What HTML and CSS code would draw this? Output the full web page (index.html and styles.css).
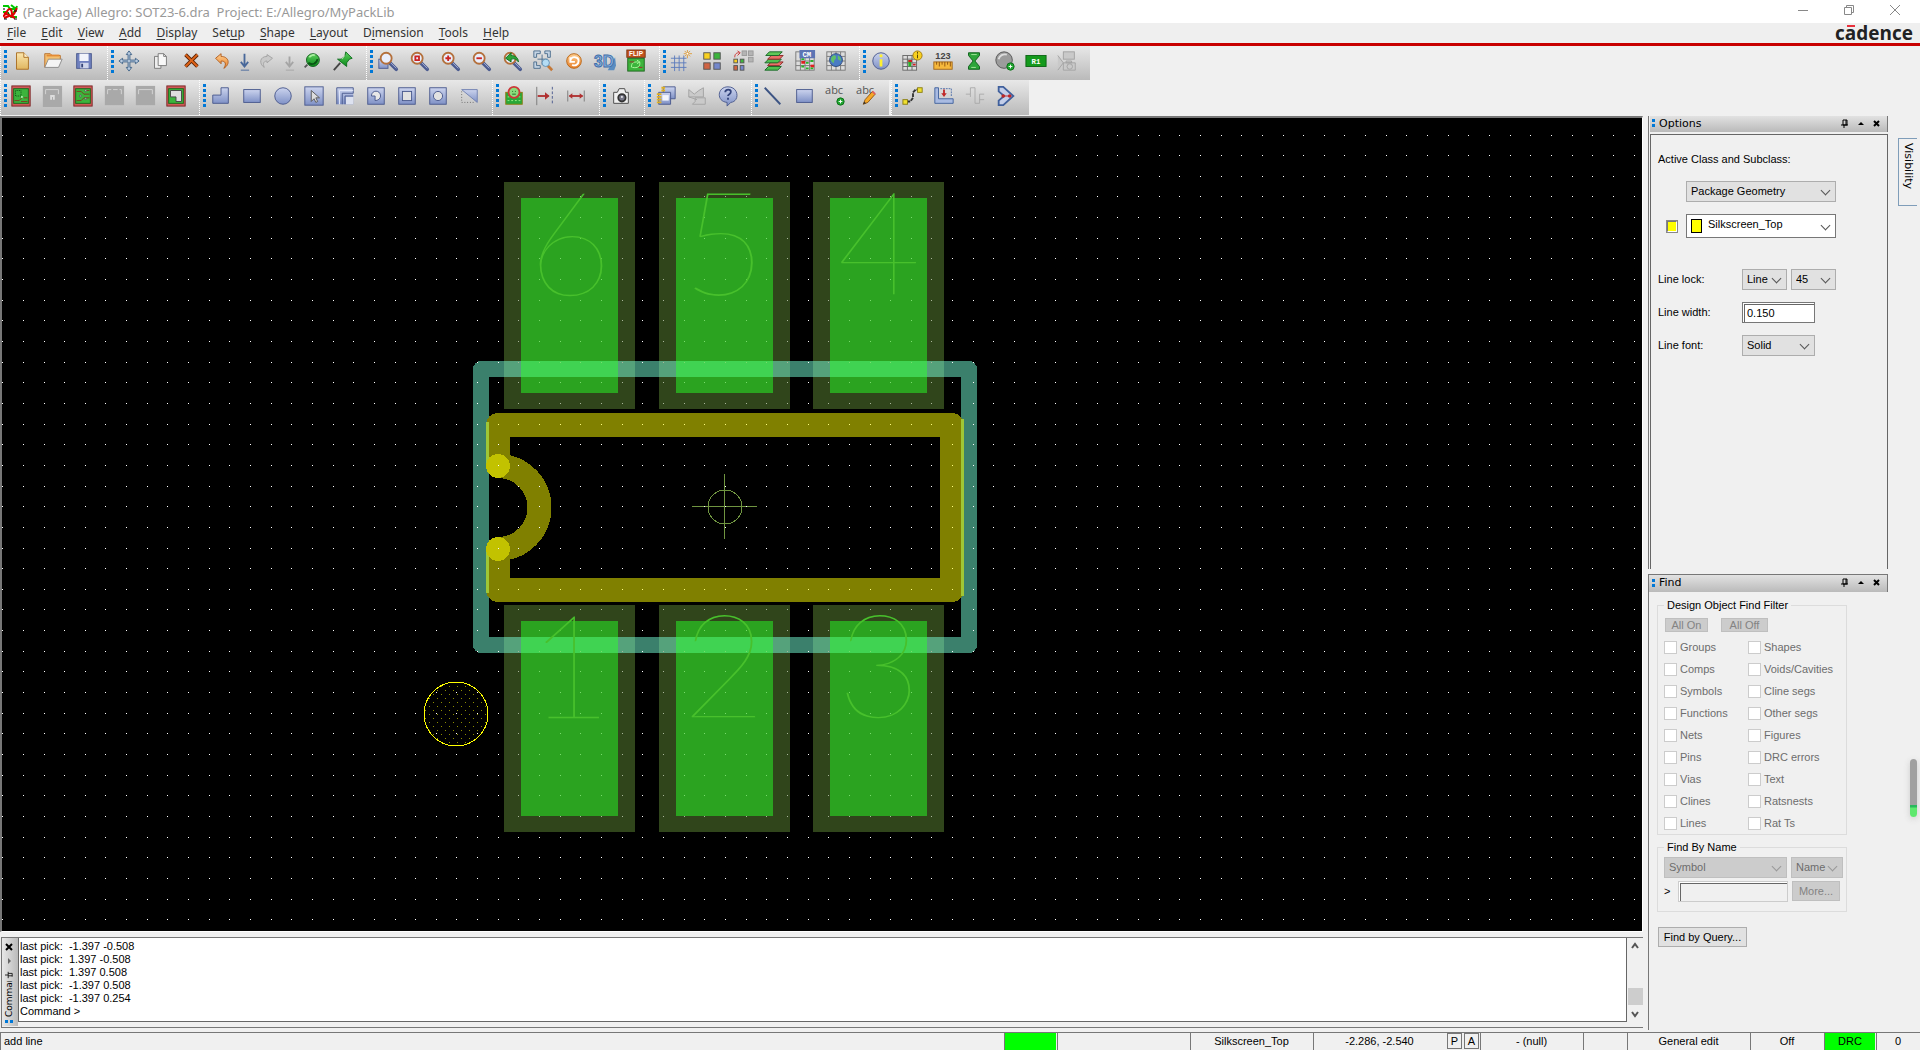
FILE: index.html
```html
<!DOCTYPE html>
<html lang="en">
<head>
<meta charset="utf-8">
<title>(Package) Allegro: SOT23-6.dra  Project: E:/Allegro/MyPackLib</title>
<link rel="stylesheet" href="styles.css">
</head>
<body>
<svg class="defs" aria-hidden="true">
  <defs>
    <linearGradient id="gBlue" x1="0" y1="0" x2="0" y2="1"><stop offset="0" stop-color="#ccd4ee"/><stop offset="1" stop-color="#7f91c6"/></linearGradient>
    <linearGradient id="gGold" x1="0" y1="0" x2="0" y2="1"><stop offset="0" stop-color="#fbe6ae"/><stop offset="1" stop-color="#e0b660"/></linearGradient>
    <linearGradient id="gGreen" x1="0" y1="0" x2="0" y2="1"><stop offset="0" stop-color="#5fd05f"/><stop offset="1" stop-color="#0a8a1a"/></linearGradient>
    <linearGradient id="gOrange" x1="0" y1="0" x2="0" y2="1"><stop offset="0" stop-color="#ffcf90"/><stop offset="1" stop-color="#e8802a"/></linearGradient>
    <g id="lens"><path d="M14 14l7 7" stroke="#4c5c90" stroke-width="4" stroke-linecap="round"/><path d="M15 14l6 6" stroke="#a8b4dc" stroke-width="1"/><circle cx="10" cy="9" r="6" fill="#e9eefc" stroke="#b4703c" stroke-width="2"/></g>
    <g id="board"><rect x="2" y="1" width="20" height="22" fill="#cf5a58" stroke="#7c2424"/><rect x="4" y="4" width="16" height="16" fill="#3cb43c" stroke="#1c661c"/></g>
    <g id="plus"><circle cx="18" cy="18" r="4" fill="#1fa52f" stroke="#0c6c18"/><path d="M18 16v4M16 18h4" stroke="#fff"/></g>
  </defs>
</svg>

<header class="titlebar">
  <svg class="app-icon" viewBox="0 0 16 16"><path d="M1 2h5l2 3h6l1-3M1 8h4l4 5h6M9 1l5 4-4 6" stroke="#00c800" stroke-width="2" fill="none"/><path d="M1 12c3 0 4-8 7-7s1 7 3 6 3-6 4-7M2 9l11 5M2 14l5-2" stroke="#e00000" stroke-width="2" fill="none"/><path d="M1 5h2M6 9h1M12 7h3M12 15h3M2 15h3" stroke="#000"/></svg>
  <h1>(Package) Allegro: SOT23-6.dra&nbsp; Project: E:/Allegro/MyPackLib</h1>
  <div class="window-buttons">
    <button aria-label="Minimize"><svg viewBox="0 0 12 12"><path d="M1 6.500h10" /></svg></button>
    <button aria-label="Restore"><svg viewBox="0 0 12 12"><path d="M1.500 3.500h7v7h-7zM3.500 3.500v-2h7v7h-2"/></svg></button>
    <button aria-label="Close"><svg viewBox="0 0 12 12"><path d="M1 1l10 10M11 1L1 11"/></svg></button>
  </div>
</header>

<nav class="menubar">
  <ul>
    <li><a href="#"><u>F</u>ile</a></li><li><a href="#"><u>E</u>dit</a></li><li><a href="#"><u>V</u>iew</a></li><li><a href="#"><u>A</u>dd</a></li><li><a href="#"><u>D</u>isplay</a></li><li><a href="#">Set<u>u</u>p</a></li><li><a href="#"><u>S</u>hape</a></li><li><a href="#"><u>L</u>ayout</a></li><li><a href="#">D<u>i</u>mension</a></li><li><a href="#"><u>T</u>ools</a></li><li><a href="#"><u>H</u>elp</a></li>
  </ul>
  <strong class="brand">c<span class="brand-a">a</span>dence</strong>
</nav>

<section class="toolbars" aria-label="Toolbars">
  <div class="toolbar-row">
    <div class="group">
      <button aria-label="New"><svg viewBox="0 0 24 24"><path d="M6 3h8l5 5v13H6z" fill="url(#gGold)" stroke="#a86c20"/><path d="M14 3v5h5" fill="#fff3cf" stroke="#a86c20"/></svg></button>
      <button aria-label="Open"><svg viewBox="0 0 24 24"><path d="M3 19V4h6l2 2h9v5" fill="#f4c070" stroke="#b8702c"/><path d="M3 19l4-9h15l-4 9z" fill="#f5f5f5" stroke="#8a8a8a"/><path d="M5 6h14" stroke="#e48a34" stroke-width="2"/></svg></button>
      <button aria-label="Save"><svg viewBox="0 0 24 24"><rect x="4" y="4" width="16" height="16" fill="#6f80be" stroke="#48588c"/><rect x="7" y="4" width="10" height="8" fill="#f2f4fb"/><rect x="8" y="14" width="9" height="6" fill="#cfd6ea"/><path d="M10 15v4" stroke="#36457a" stroke-width="2"/></svg></button>
    </div>
    <div class="group">
      <button aria-label="Move"><svg viewBox="0 0 24 24"><path d="M12 1l3 4h-2v6h6V9l4 3-4 3v-2h-6v6h2l-3 4-3-4h2v-6H5v2l-4-3 4-3v2h6V5H9z" fill="#b9cbe0" stroke="#3f6288"/></svg></button>
      <button aria-label="Copy"><svg viewBox="0 0 24 24"><path d="M6 7h7v13H6z" fill="#eee" stroke="#777"/><path d="M10 4h6l3 3v10h-9z" fill="#f8f8f8" stroke="#777"/><path d="M16 4v3h3" fill="none" stroke="#777"/></svg></button>
      <button aria-label="Delete"><svg viewBox="0 0 24 24"><path d="M6 5l13 13M19 5L6 18" stroke="#5c2408" stroke-width="4"/><path d="M6 5l13 13M19 5L6 18" stroke="#e06418" stroke-width="2"/></svg></button>
      <button aria-label="Undo"><svg viewBox="0 0 24 24"><path d="M5 9l6-5v3c8 0 11 8 3 13 3-5 2-8-3-8v3z" fill="url(#gOrange)" stroke="#b05c1c"/></svg></button>
      <button class="slim" aria-label="Undo history"><svg viewBox="0 0 12 24"><path d="M6 4v13M2 13l4 5 4-5" stroke="#48689a" stroke-width="2" fill="none"/><path d="M2 22h9" stroke="#48689a"/></svg></button>
      <button aria-label="Redo"><svg viewBox="0 0 24 24"><path d="M18 9l-6-4v2c-8 0-9 8-3 12-2-5 0-7 3-7v2z" fill="#c9c9c9" stroke="#a2a2a2"/></svg></button>
      <button class="slim" aria-label="Redo history"><svg viewBox="0 0 12 24"><path d="M6 7v11M2 13l4 5 4-5" stroke="#a5a5a5" stroke-width="2" fill="none"/><path d="M2 22h9" stroke="#a5a5a5"/></svg></button>
      <button aria-label="Fix"><svg viewBox="0 0 24 24"><path d="M7 16l-3 3" stroke="#555" stroke-width="2"/><circle cx="13" cy="11" r="7" fill="url(#gGreen)" stroke="#0c5c18"/><path d="M8 14c4 3 9 1 10-4" stroke="#0a5414" stroke-width="2" fill="none"/><path d="M9 8c2-3 5-3 6-2" stroke="#a8f0a0" stroke-width="2" fill="none"/></svg></button>
      <button aria-label="Unfix"><svg viewBox="0 0 24 24"><path d="M9 14l-7 8" stroke="#444" stroke-width="2"/><path d="M15 2l7 7-3 1-3 4v4L6 10h4l4-3z" fill="url(#gGreen)" stroke="#0c6c1c"/><path d="M14 6l-3 4" stroke="#b0f0a8"/></svg></button>
    </div>
    <div class="group">
      <button aria-label="Zoom points"><svg viewBox="0 0 24 24"><rect x="2" y="10" width="10" height="10" fill="url(#gBlue)" stroke="#4c5c90"/><use href="#lens"/></svg></button>
      <button aria-label="Zoom fit"><svg viewBox="0 0 24 24"><use href="#lens"/><path d="M8 7h4v4h-4z" fill="none" stroke="#cc2222" stroke-width="2"/></svg></button>
      <button aria-label="Zoom in"><svg viewBox="0 0 24 24"><use href="#lens"/><path d="M10 6v6M7 9h6" stroke="#cc2222" stroke-width="2"/></svg></button>
      <button aria-label="Zoom out"><svg viewBox="0 0 24 24"><use href="#lens"/><path d="M7 9h6" stroke="#cc2222" stroke-width="2"/></svg></button>
      <button aria-label="Zoom previous"><svg viewBox="0 0 24 24"><use href="#lens"/><path d="M5 9l6-6v3c5 0 8 3 8 7-2-3-4-4-8-3v3z" fill="#2da53a" stroke="#0c6c18"/></svg></button>
      <button aria-label="Zoom selection"><svg viewBox="0 0 24 24"><path d="M2 8V1h7v3H5v4zM14 1h6v7h-3V4h-3zM2 13v7h7v-3H5v-4z" fill="#c4d4e4" stroke="#4c6c8c"/><path d="M11 5v11M6 10h11" stroke="#4c6c8c"/><path d="M17 17l5 5" stroke="#c47838" stroke-width="3"/><circle cx="15" cy="14" r="4" fill="#b4dcf4" stroke="#6090b4"/></svg></button>
      <button aria-label="Redraw"><svg viewBox="0 0 24 24"><circle cx="12" cy="12" r="8" fill="url(#gOrange)" stroke="#b86414"/><path d="M8 8v5h5M8 12c1-6 9-5 9 0 0 4-4 6-7 4" stroke="#fff" stroke-width="2" fill="none"/></svg></button>
      <button aria-label="3D view"><svg viewBox="0 0 24 24"><path d="M15 22h7l2-5-1-9z" fill="#5a8cc0"/><text x="0" y="19" class="t3d">3D</text></svg></button>
      <button aria-label="Flip"><svg viewBox="0 0 24 24"><rect x="2" y="0" width="20" height="8" fill="#c4541c" stroke="#7c3010"/><text x="12" y="7" class="tflip">FLIP</text><rect x="3" y="9" width="18" height="14" fill="#3cb43c" stroke="#1c641c"/><path d="M7 19c0-5 2-6 7-6M8 19c6 1 9-1 8-6M13 11l3 2-3 2" stroke="#b0ffa0" fill="none"/><path d="M5 13h5M15 19h4" stroke="#9c2c2c"/></svg></button>
    </div>
    <div class="group">
      <button aria-label="Grid"><svg viewBox="0 0 24 24"><path d="M5 6v17M10 6v17M15 6v17M1 9h17M1 14h17M1 19h17" stroke="#5c7cbc" fill="none"/><path d="M19 0v9M15 4h9M16 1l6 6M22 1l-6 6" stroke="#dd9c3c"/><circle cx="19" cy="4" r="1" fill="#fff"/></svg></button>
      <button aria-label="Colors"><svg viewBox="0 0 24 24"><g stroke="#555"><rect x="3" y="3" width="7" height="7" fill="#f8d020"/><rect x="14" y="3" width="7" height="7" fill="#3cb43c"/><rect x="3" y="14" width="7" height="7" fill="#d06444"/><rect x="14" y="14" width="7" height="7" fill="#7488cc"/></g></svg></button>
      <button aria-label="Color palette"><svg viewBox="0 0 24 24"><g fill="#b4b4b4" stroke="#999"><rect x="11" y="1" width="5" height="5"/><rect x="18" y="1" width="5" height="5"/><rect x="18" y="8" width="5" height="5"/></g><g stroke="#555"><rect x="2" y="10" width="4" height="4" fill="#f8d020"/><rect x="9" y="10" width="4" height="4" fill="#3cb43c"/><rect x="2" y="17" width="4" height="5" fill="#d06444"/><rect x="9" y="17" width="4" height="5" fill="#7488cc"/></g><path d="M3 8c0-4 2-5 5-5M6 1l3 2-3 3" stroke="#cc3030" fill="none"/></svg></button>
      <button aria-label="Layers"><svg viewBox="0 0 24 24"><path d="M2 22l4-4h14l-4 4z" fill="#50c050" stroke="#146424"/><path d="M5 17l4-4h13l-4 4z" fill="#e87068" stroke="#8c2424"/><path d="M2 14l4-4h14l-4 4z" fill="#50c050" stroke="#146424"/><path d="M5 10l4-4h13l-4 4z" fill="#e87068" stroke="#8c2424"/><path d="M3 6l4-4h14l-4 4z" fill="#60c858" stroke="#146424"/></svg></button>
      <button aria-label="Constraint manager"><svg viewBox="0 0 24 24"><rect x="2" y="2" width="20" height="20" fill="#ddd" stroke="#777"/><path d="M7 2v20M12 2v20M17 2v20M2 12h20M2 17h20" stroke="#777"/><rect x="8" y="12" width="4" height="3" fill="#e02020"/><rect x="18" y="16" width="4" height="3" fill="#e02020"/><path d="M8 10h3M8 18h3M13 14h3M13 20h3M18 12h3M18 20h3" stroke="#28b428" stroke-width="2"/><rect x="6" y="0" width="17" height="9" fill="#5c74b4"/><text x="14" y="8" class="tcm">CM</text></svg></button>
      <button aria-label="Database"><svg viewBox="0 0 24 24"><rect x="2" y="2" width="20" height="20" fill="#ddd" stroke="#777"/><path d="M7 2v20M12 2v20M17 2v20M2 7h20M2 12h20M2 17h20" stroke="#777"/><circle cx="12" cy="11" r="7" fill="#4a7cc4" stroke="#28487c"/><path d="M7 8c2-3 5-3 5 0s-3 3-2 6c-3 0-4-3-3-6zM14 6c3 1 4 4 3 6l-3-2z" fill="#60c068"/></svg></button>
    </div>
    <div class="group">
      <button aria-label="Show element"><svg viewBox="0 0 24 24"><circle cx="12" cy="12" r="9" fill="url(#gBlue)" stroke="#48588c"/><path d="M12 10v8M12 5v3" stroke="#fff030" stroke-width="3"/></svg></button>
      <button aria-label="Property report"><svg viewBox="0 0 24 24"><rect x="2" y="6" width="15" height="16" fill="#ddd" stroke="#666"/><path d="M7 6v16M12 6v16M2 10h15M2 14h15M2 18h15" stroke="#666"/><path d="M8 11h3v7H8z" fill="#28b428"/><path d="M8 12h4M13 16h3" stroke="#d02020" stroke-width="2"/><circle cx="18" cy="6" r="5" fill="#f8d020" stroke="#a07810"/><path d="M18 5v4M18 2v2" stroke="#4c3c08" stroke-width="1"/></svg></button>
      <button aria-label="Measure"><svg viewBox="0 0 24 24"><text x="12" y="10" class="t123">123</text><rect x="2" y="13" width="20" height="8" fill="#f6b83c" stroke="#a0661c"/><path d="M5 13v3M8 13v5M11 13v3M14 13v5M17 13v3M20 13v5" stroke="#8c5010"/></svg></button>
      <button aria-label="Wait"><svg viewBox="0 0 24 24"><path d="M6 3h12v3l-5 6 5 6v3H6v-3l5-6-5-6z" fill="#2da53a" stroke="#0c5c18"/><path d="M9 5h6M9 19h5" stroke="#a8e8a0"/></svg></button>
      <button aria-label="Add via"><svg viewBox="0 0 24 24"><circle cx="11" cy="11" r="9" fill="#9c9c9c" stroke="#555"/><path d="M5 10c1-4 5-6 9-5" stroke="#ddd" stroke-width="2" fill="none"/><use href="#plus"/></svg></button>
      <button aria-label="Reference designator"><svg viewBox="0 0 24 24"><rect x="1" y="6" width="22" height="12" fill="#149a1c" stroke="#0c6414"/><text x="12" y="15" class="tref">R1</text></svg></button>
      <button aria-label="Capture"><svg viewBox="0 0 24 24"><g fill="#c9c9c9" stroke="#a2a2a2"><rect x="8" y="2" width="12" height="8"/><path d="M8 14h13v8H8zM2 6l6 8-6 8M11 12h6v2h-6z"/><circle cx="15" cy="18" r="3"/></g></svg></button>
    </div>
  </div>
  <div class="toolbar-row second">
    <div class="group">
      <button aria-label="General edit mode"><svg viewBox="0 0 24 24"><use href="#board"/><path d="M6 6h6v6H6z" fill="none" stroke="#0c4c14" stroke-dasharray="1 1"/><path d="M5 17h5l3-3M12 18h7M15 14h4" stroke="#7c3c20" fill="none"/><circle cx="13" cy="13" r="1" fill="#cfc"/></svg></button>
      <button aria-label="Placement edit mode"><svg viewBox="0 0 24 24"><rect x="2" y="1" width="21" height="23" fill="#a9a9a9"/><path d="M5 10V5h14v5" fill="none" stroke="#d6d6d6"/><path d="M11 16v-4h3v4" fill="none" stroke="#ddd" stroke-width="2"/></svg></button>
      <button aria-label="Etch edit mode"><svg viewBox="0 0 24 24"><use href="#board"/><path d="M5 7h5l3 3h6M5 17h5l3-3h6M15 6h4" stroke="#7c3c20" fill="none"/><g fill="#cfc" stroke="#555"><circle cx="15" cy="6" r="1"/><circle cx="9" cy="12" r="1"/><circle cx="15" cy="15" r="1"/></g></svg></button>
      <button aria-label="Flow plan edit mode"><svg viewBox="0 0 24 24"><rect x="2" y="1" width="21" height="21" fill="#a9a9a9"/><path d="M5 10V5h4m2 0h5m2 0h2v5" fill="none" stroke="#d6d6d6"/></svg></button>
      <button aria-label="Signal integrity mode"><svg viewBox="0 0 24 24"><rect x="2" y="1" width="21" height="21" fill="#a9a9a9"/><path d="M5 10V5h15v5" fill="none" stroke="#d6d6d6"/></svg></button>
      <button aria-label="Shape edit mode"><svg viewBox="0 0 24 24"><use href="#board"/><path d="M6 6h12v12h-6v-5H6z" fill="#ddd" stroke="#444"/></svg></button>
    </div>
    <div class="group">
      <button aria-label="Add polygon"><svg viewBox="0 0 24 24"><path d="M12 3h8v17H3v-9h9z" fill="url(#gBlue)" stroke="#48588c"/></svg></button>
      <button aria-label="Add rectangle"><svg viewBox="0 0 24 24"><rect x="3" y="5" width="18" height="14" fill="url(#gBlue)" stroke="#48588c"/></svg></button>
      <button aria-label="Add circle"><svg viewBox="0 0 24 24"><circle cx="12" cy="12" r="9" fill="url(#gBlue)" stroke="#48588c"/></svg></button>
      <button aria-label="Select shape"><svg viewBox="0 0 24 24"><rect x="2" y="2" width="20" height="20" fill="url(#gBlue)" stroke="#48588c"/><path d="M9 6v12l3-3 2 4 2-1-2-4h4z" fill="#ddd" stroke="#555"/></svg></button>
      <button aria-label="Compose void"><svg viewBox="0 0 24 24"><rect x="3" y="3" width="18" height="18" fill="url(#gBlue)"/><path d="M13 13h8v8h-8z" fill="#dde2f0"/><path d="M3 21V3h18v6H9v12M12 21v-9h9" fill="none" stroke="#48588c"/><path d="M6 21V6h15" fill="none" stroke="#e4e9fa"/></svg></button>
      <button aria-label="Void polygon"><svg viewBox="0 0 24 24"><rect x="3" y="3" width="18" height="18" fill="url(#gBlue)" stroke="#48588c"/><path d="M7 12c0-7 10-7 10 0 0 3-3 5-6 5v-5z" fill="#e8e8e8" stroke="#48588c"/></svg></button>
      <button aria-label="Void rectangle"><svg viewBox="0 0 24 24"><rect x="3" y="3" width="18" height="18" fill="url(#gBlue)" stroke="#48588c"/><rect x="7" y="7" width="10" height="10" fill="#e2e2e2" stroke="#48588c"/></svg></button>
      <button aria-label="Void circle"><svg viewBox="0 0 24 24"><rect x="3" y="3" width="18" height="18" fill="url(#gBlue)" stroke="#48588c"/><circle cx="12" cy="12" r="5" fill="#e2e2e2" stroke="#48588c"/></svg></button>
      <button aria-label="Delete islands"><svg viewBox="0 0 24 24"><path d="M4 5h17v14z" fill="url(#gBlue)" stroke="#7080b0"/><path d="M4 7v12h15" fill="none" stroke="#666" stroke-dasharray="1 2"/></svg></button>
    </div>
    <div class="group">
      <button aria-label="Dimension environment"><svg viewBox="0 0 24 24"><rect x="3" y="8" width="18" height="13" fill="#28a838" stroke="#8c7c10"/><path d="M5 13h2m2 0h2m2 0h2m2 0h2M5 17h2m2 0h2m2 0h2m2 0h2" stroke="#a0f088"/><circle cx="12" cy="8" r="6" fill="#8cdc7c" stroke="#cc3838" stroke-width="2"/><path d="M10 7h1M13 7h1M10 10h4" stroke="#186c20"/></svg></button>
      <button aria-label="Leader dimension"><svg viewBox="0 0 24 24"><path d="M3 2v20" stroke="#777"/><path d="M20 2v20" stroke="#48588c" stroke-dasharray="3 2"/><path d="M4 12h12" stroke="#b03030" stroke-width="2"/><path d="M12 8v8l5-4z" fill="#b03030"/></svg></button>
      <button aria-label="Linear dimension"><svg viewBox="0 0 24 24"><path d="M3 6v12M21 6v12" stroke="#777"/><path d="M5 12h14" stroke="#b03030" stroke-width="2"/><path d="M8 9v6l-4-3zM16 9v6l4-3z" fill="#b03030"/></svg></button>
    </div>
    <div class="group">
      <button aria-label="Snapshot"><svg viewBox="0 0 24 24"><path d="M4 8h4l2-4h6l1 4h3v12H4z" fill="#f0f0f0" stroke="#444"/><circle cx="13" cy="14" r="4" fill="#778" stroke="#333" stroke-width="2"/><circle cx="13" cy="13" r="1" fill="#fff"/></svg></button>
    </div>
    <div class="group">
      <button aria-label="Reports"><svg viewBox="0 0 24 24"><path d="M9 2h13v13H9z" fill="url(#gBlue)" stroke="#48588c"/><path d="M4 8h13v13H4z" fill="url(#gBlue)" stroke="#48588c"/><rect x="8" y="11" width="7" height="6" fill="#f4f6fc"/><path d="M2 10h5M2 13h5M2 16h5M2 19h5M7 3h4M7 6h4" stroke="#e0b020" stroke-width="2"/></svg></button>
      <button aria-label="Cross probe"><svg viewBox="0 0 24 24"><g fill="#cacaca" stroke="#a2a2a2"><path d="M3 5l6 5 5-4 5-3v10H3zM10 14h11v7H7l3-3zM3 13l9 3"/></g></svg></button>
      <button aria-label="Help"><svg viewBox="0 0 24 24"><path d="M12 2c12 0 13 16 3 17l-4 4v-4C-1 18 0 2 12 2z" fill="url(#gBlue)" stroke="#48588c"/><path d="M9 8c0-4 7-4 6 0 0 2-3 2-3 4M12 14v2" stroke="#33447c" stroke-width="2" fill="none"/></svg></button>
    </div>
    <div class="group last">
      <button aria-label="Add line"><svg viewBox="0 0 24 24"><path d="M3 3l17 18" stroke="#3c5484" stroke-width="2"/></svg></button>
      <button aria-label="Add filled rectangle"><svg viewBox="0 0 24 24"><rect x="4" y="5" width="17" height="14" fill="url(#gBlue)" stroke="#48588c"/></svg></button>
      <button aria-label="Add text"><svg viewBox="0 0 24 24"><text x="11" y="10" class="tabc">abc</text><use href="#plus"/></svg></button>
      <button aria-label="Edit text"><svg viewBox="0 0 24 24"><text x="11" y="10" class="tabc">abc</text><path d="M9 21l2-5 8-9 3 3-8 9z" fill="#f6a828" stroke="#8c5410"/><path d="M19 7l3 3" stroke="#e06060" stroke-width="2"/><path d="M9 21l1-3 2 2z" fill="#333"/></svg></button>
    </div>
    <div class="group">
      <button aria-label="Add connect"><svg viewBox="0 0 24 24"><path d="M5 18h4l3-4V8l3-3h4" stroke="#333" stroke-width="2" stroke-dasharray="4 1" fill="none"/><rect x="1" y="16" width="5" height="5" fill="#f0e030" stroke="#887c10"/><rect x="17" y="3" width="5" height="5" fill="#f0e030" stroke="#887c10"/></svg></button>
      <button aria-label="Slide"><svg viewBox="0 0 24 24"><path d="M2 3h4v12h16v5H2z" fill="#a9bbe2" stroke="#40609c"/><path d="M8 4h12v9" stroke="#4c6ca8" fill="none" stroke-dasharray="2 1"/><path d="M12 5v5" stroke="#c02828" stroke-width="2"/><path d="M9 9h6l-3 4z" fill="#c02828"/></svg></button>
      <button aria-label="Delay tune"><svg viewBox="0 0 24 24"><path d="M2 10h5V3h5v17h5V10h5M7 10v3M17 16h5" stroke="#aaa" fill="none"/></svg></button>
      <button aria-label="Custom smooth"><svg viewBox="0 0 24 24"><path d="M4 2h5l11 10-11 10H4v-5l6-5-6-5z" fill="#c3cee9" stroke="#40609c" stroke-width="2"/><path d="M8 12h8" stroke="#c02828"/><circle cx="9" cy="12" r="2" fill="#c02828"/><circle cx="16" cy="12" r="2" fill="#c02828"/></svg></button>
    </div>
  </div>
</section>

<main class="workspace">
  <div class="center">
    <section class="canvas" aria-label="Design canvas">
      <svg class="drawing">
        <defs>
          <path id="grid" d=""/>
          <pattern id="fill-dots" width="8" height="8" patternUnits="userSpaceOnUse" x="5" y="2"><path d="M0 0h1v1H0zM4 4h1v1H4z" fill="#8c8c00"/></pattern>
          <g id="mask"><rect width="131" height="227" fill="#30451b"/></g>
          <g id="pad"><rect x="17" y="16" width="97" height="195" fill="#2ba320"/></g>
          <clipPath id="clip-mask"><path d="M504 182h131v227H504zM659 182h131v227H659zM813 182h131v227H813zM504 605h131v227H504zM659 605h131v227H659zM813 605h131v227H813z"/></clipPath>
          <clipPath id="clip-pad"><path d="M521 198h97v195h-97zM676 198h97v195h-97zM830 198h97v195h-97zM521 621h97v195h-97zM676 621h97v195h-97zM830 621h97v195h-97z"/></clipPath>
          <clipPath id="clip-silk"><path d="M486 413h478v24H486zM486 578h478v24H486zM940 413h24v189h-24z"/></clipPath>
        </defs>
        <g transform="translate(-2 -118)" shape-rendering="crispEdges">
          <use href="#mask" x="504" y="182"/><use href="#mask" x="659" y="182"/><use href="#mask" x="813" y="182"/>
          <use href="#mask" x="504" y="605"/><use href="#mask" x="659" y="605"/><use href="#mask" x="813" y="605"/>
          <use href="#pad" x="504" y="182"/><use href="#pad" x="659" y="182"/><use href="#pad" x="813" y="182"/>
          <use href="#pad" x="504" y="605"/><use href="#pad" x="659" y="605"/><use href="#pad" x="813" y="605"/>
          <rect class="outline teal" x="481" y="369" width="488" height="276"/>
          <rect class="outline teal-mask" x="481" y="369" width="488" height="276" clip-path="url(#clip-mask)"/>
          <rect class="outline teal-pad" x="481" y="369" width="488" height="276" clip-path="url(#clip-pad)"/>
          <path class="silk" d="M498 466V425H952V590H498V549"/>
          <path class="silk" d="M498 466A41 41 0 0 1 498 549"/>
          <path d="M486 422h3v44h-3zM486 549h3v44h-3zM961 419h3v177h-3z" fill="#9fc636"/>
          <circle cx="498" cy="466" r="12" fill="#c2c200"/><circle cx="498" cy="549" r="12" fill="#c2c200"/>
          <path class="origin" d="M692 506.500h65M724.500 474v65"/>
          <circle class="origin" cx="725" cy="507" r="17"/>
          <circle cx="456" cy="714" r="32" fill="url(#fill-dots)" stroke="#ff0"/>
          <use href="#grid" fill="#fff"/>
          <use href="#grid" fill="#a9b69a" clip-path="url(#clip-mask)"/>
          <use href="#grid" fill="#78dc6c" clip-path="url(#clip-pad)"/>
          <use href="#grid" fill="#ffff80" clip-path="url(#clip-silk)"/>
        </g>
        <g class="pin-number" transform="translate(-2 -118)">
          <text x="570" y="295">6</text><text x="724" y="295">5</text><text x="879" y="295">4</text>
          <text x="570" y="718">1</text><text x="724" y="718">2</text><text x="879" y="718">3</text>
        </g>
      </svg>
    </section>
    <section class="command">
      <div class="command-tab">
        <button aria-label="Close command"><svg viewBox="0 0 8 8"><path d="M1 1l6 6M7 1L1 7" stroke="#000" stroke-width="2"/></svg></button>
        <button aria-label="Collapse command"><svg viewBox="0 0 8 8"><path d="M3 1l3 3-3 3z" fill="#666"/></svg></button>
        <button class="pin" aria-label="Pin command"><svg viewBox="0 0 10 8"><path d="M0 4h4M4 0v8M4 2h5M4 5h5M9 2v4" stroke="#000" fill="none"/></svg></button>
        <label for="console">Command</label>
        <i class="grip-h"></i>
      </div>
      <textarea id="console" readonly>last pick:  -1.397 -0.508
last pick:  1.397 -0.508
last pick:  1.397 0.508
last pick:  -1.397 0.508
last pick:  -1.397 0.254
Command &gt;</textarea>
      <div class="scrollbar">
        <button aria-label="Scroll up"><svg viewBox="0 0 10 10"><path d="M2 7l3-4 3 4" fill="none" stroke="#555" stroke-width="2"/></svg></button>
        <span class="thumb"></span>
        <button aria-label="Scroll down"><svg viewBox="0 0 10 10"><path d="M2 3l3 4 3-4" fill="none" stroke="#555" stroke-width="2"/></svg></button>
      </div>
    </section>
  </div>

  <aside class="dock">
    <section class="panel options">
      <header class="panel-head"><i class="grip-v"></i><h2>Options</h2>
        <button aria-label="Pin"><svg viewBox="0 0 9 9"><path d="M3 1h4v5H3zM1 6h7M4 6v3M6 1v5" fill="none" stroke="#000"/></svg></button>
        <button aria-label="Collapse"><svg viewBox="0 0 9 9"><path d="M2 6l3-3 3 3z"/></svg></button>
        <button aria-label="Close"><svg viewBox="0 0 9 9"><path d="M2 2l5 5M7 2L2 7" stroke="#000" stroke-width="2"/></svg></button>
      </header>
      <form class="panel-body">
        <p class="caption">Active Class and Subclass:</p>
        <div class="row class-row"><span class="pick wide"><select aria-label="Active class"><option>Package Geometry</option></select></span></div>
        <div class="row subclass-row"><button type="button" class="color" aria-label="Subclass color"></button><span class="pick wide white"><i class="swatch"></i><select aria-label="Active subclass"><option>Silkscreen_Top</option></select></span></div>
        <div class="fields">
          <label for="lock">Line lock:</label><div class="row pair"><span class="pick short"><select id="lock"><option>Line</option></select></span><span class="pick short"><select aria-label="Line angle"><option>45</option></select></span></div>
          <label for="width">Line width:</label><input id="width" class="sunken" type="text" value="0.150">
          <label for="font">Line font:</label><span class="pick medium"><select id="font"><option>Solid</option></select></span>
        </div>
      </form>
    </section>
    <section class="panel find">
      <header class="panel-head"><i class="grip-v"></i><h2>Find</h2>
        <button aria-label="Pin"><svg viewBox="0 0 9 9"><path d="M3 1h4v5H3zM1 6h7M4 6v3M6 1v5" fill="none" stroke="#000"/></svg></button>
        <button aria-label="Collapse"><svg viewBox="0 0 9 9"><path d="M2 6l3-3 3 3z"/></svg></button>
        <button aria-label="Close"><svg viewBox="0 0 9 9"><path d="M2 2l5 5M7 2L2 7" stroke="#000" stroke-width="2"/></svg></button>
      </header>
      <form class="find-body">
        <fieldset class="filter">
          <legend>Design Object Find Filter</legend>
          <div class="row all"><button type="button" disabled>All On</button><button type="button" disabled>All Off</button></div>
          <div class="checks">
            <label><input type="checkbox" disabled>Groups</label><label><input type="checkbox" disabled>Shapes</label>
            <label><input type="checkbox" disabled>Comps</label><label><input type="checkbox" disabled>Voids/Cavities</label>
            <label><input type="checkbox" disabled>Symbols</label><label><input type="checkbox" disabled>Cline segs</label>
            <label><input type="checkbox" disabled>Functions</label><label><input type="checkbox" disabled>Other segs</label>
            <label><input type="checkbox" disabled>Nets</label><label><input type="checkbox" disabled>Figures</label>
            <label><input type="checkbox" disabled>Pins</label><label><input type="checkbox" disabled>DRC errors</label>
            <label><input type="checkbox" disabled>Vias</label><label><input type="checkbox" disabled>Text</label>
            <label><input type="checkbox" disabled>Clines</label><label><input type="checkbox" disabled>Ratsnests</label>
            <label><input type="checkbox" disabled>Lines</label><label><input type="checkbox" disabled>Rat Ts</label>
          </div>
        </fieldset>
        <fieldset class="by-name">
          <legend>Find By Name</legend>
          <div class="row"><span class="pick grow"><select aria-label="Object type" disabled><option>Symbol</option></select></span><span class="pick name"><select aria-label="Search by" disabled><option>Name</option></select></span></div>
          <div class="row"><label for="find-name">&gt;</label><input id="find-name" class="sunken grow" type="text" disabled><button type="button" disabled>More...</button></div>
        </fieldset>
        <button type="button" class="query">Find by Query...</button>
      </form>
    </section>
  </aside>
  <div class="side">
    <button class="side-tab">Visibility</button>
    <span class="meter"></span>
  </div>
</main>

<footer class="status">
  <span class="message">add line</span><span class="progress on"></span><span class="blank"></span><span class="layer">Silkscreen_Top</span><span class="coords">-2.286, -2.540</span><button>P</button><button>A</button><span class="net">- (null)</span><span class="gap"></span><span class="mode">General edit</span><span class="off">Off</span><span class="drc on">DRC</span><span class="count">0</span>
</footer>
<script src="grid.js"></script>
</body>
</html>
```
FILE: grid.js
```js
// Draws the snap grid: one-pixel dots at whole pixels over the canvas area.
const pitch = 20.65;
let d = "";
for (let row = 0; row < 60; row++) {
  for (let col = 0; col < 140; col++) {
    const x = Math.round(2.2 + col * pitch);
    const y = Math.round(134.5 + row * pitch);
    d += `M${x} ${y}h1v1h-1z`;
  }
}
document.getElementById("grid").setAttribute("d", d);
```
FILE: styles.css
```css
* { box-sizing: border-box; }
body { margin: 0; height: 100vh; display: flex; flex-direction: column; background: #f0f0f0; color: #000; font: 11px/13px "Liberation Sans", Arial, sans-serif; overflow: hidden; }
button, input, select, textarea { font: inherit; color: inherit; margin: 0; padding: 0; border: 0; border-radius: 0; background: none; }
h1, h2, p, ul { margin: 0; padding: 0; font: inherit; }
.defs { position: absolute; width: 0; height: 0; }

.titlebar { height: 23px; display: flex; align-items: center; gap: 5px; padding: 0 2px; background: #fff; color: #999; flex: none; }
.titlebar h1 { font: 13px/18px "Noto Sans", sans-serif; flex: 1; }
.app-icon { width: 16px; height: 16px; }
.window-buttons { display: flex; }
.window-buttons button { width: 46px; height: 23px; display: grid; place-items: center; padding-bottom: 3px; }
.window-buttons svg { width: 12px; height: 12px; fill: none; stroke: #888; }

.menubar { height: 23px; flex: none; display: flex; justify-content: space-between; background: #efefef; border-bottom: 3px solid #c80000; padding: 0 7px; }
.menubar ul { display: flex; gap: 15px; list-style: none; }
.menubar a { color: #333; text-decoration: none; font: 12px/20px "Noto Sans", sans-serif; }
.menubar u { text-underline-offset: 2px; }
.brand { position: relative; font: bold 19px/20px "Open Sans", sans-serif; color: #222; }
.brand-a { position: relative; }
.brand-a::before { content: ""; position: absolute; left: 2px; top: 5px; width: 8px; height: 2px; background: #e8303c; }

.toolbars { flex: none; height: 70px; }
.toolbar-row { display: flex; height: 34px; }
.group { display: flex; align-items: center; height: 34px; padding: 0 8px 4px 5px; position: relative; background: linear-gradient(#e8e8e8, #bababa); border-left: 1px dotted #fff; }
.group::before { content: ""; position: absolute; left: 3px; top: 4px; width: 3px; height: 23px; background: repeating-linear-gradient(#0078d7 0 3px, transparent 3px 5px); }
.group.last { margin-right: 2px; }
.group button { width: 31px; height: 28px; display: grid; place-items: center; }
.group .slim { width: 14px; }
.group svg { width: 22px; height: 22px; fill: none; overflow: visible; }
.group .slim svg { width: 11px; }
.second, .second .group { height: 35px; }
.second .group { padding-bottom: 3px; }
.second .group:first-child { padding-left: 4px; }
.t3d { font: bold 17px "Liberation Sans", sans-serif; fill: #8cb4e0; stroke: #3c6ca8; }
.tflip { font: bold 7px "Liberation Sans", sans-serif; fill: #fff; text-anchor: middle; }
.tcm { font: bold 8px "Liberation Mono", monospace; fill: #fff; text-anchor: middle; }
.t123 { font: bold 10px "Liberation Sans", sans-serif; fill: #444; text-anchor: middle; }
.tref { font: bold 8px "Liberation Mono", monospace; fill: #fff; text-anchor: middle; }
.tabc { font: 12px "Open Sans", sans-serif; fill: #555; text-anchor: middle; }

.workspace { flex: 1; min-height: 0; display: flex; }
.center { flex: 1; min-width: 0; display: flex; flex-direction: column; gap: 5px; }
.canvas { flex: 1; min-height: 0; background: #000; border: solid; border-width: 2px 1px 1px 2px; border-color: #777 #fff #fff #777; overflow: hidden; }
.drawing { display: block; width: 100%; height: 100%; }
.outline { fill: none; stroke-width: 16; stroke-linejoin: round; }
.teal { stroke: #3b806c; }
.teal-mask { stroke: #55a27b; }
.teal-pad { stroke: #40d352; }
.silk { fill: none; stroke: #808000; stroke-width: 24; stroke-linejoin: round; }
.origin { fill: none; stroke: #6f9440; }
.pin-number { font: 100 145px Lato, Inter, sans-serif; fill: #48c02c; text-anchor: middle; }

.command { flex: none; height: 91px; display: flex; border: 1px solid #777; border-right: 0; margin: 0 0 4px 1px; padding-bottom: 5px; }
.command-tab { width: 16px; margin-bottom: -4px; display: flex; flex-direction: column; align-items: center; gap: 6px; padding: 5px 2px 1px 0; background: linear-gradient(90deg, #e8e8e8, #bababa); }
.command-tab button { width: 8px; height: 8px; display: block; flex: none; line-height: 0; }
.command-tab svg { width: 8px; height: 8px; display: block; }
.command-tab label { writing-mode: vertical-rl; transform: rotate(180deg); font: 9px/12px "DejaVu Sans", sans-serif; height: 36px; overflow: hidden; margin-top: -4px; flex: none; }
.grip-h { width: 8px; height: 3px; flex: none; margin-top: -3px; background: repeating-linear-gradient(90deg, #0078d7 0 3px, transparent 3px 5px); }
.command textarea { flex: 1; resize: none; overflow: hidden; background: #fff; padding: 2px 1px; border: solid #666; border-width: 0 1px 1px 1px; white-space: pre; outline: 0; }
.scrollbar { width: 16px; display: flex; flex-direction: column; align-items: center; padding: 3px 0; }
.scrollbar button { width: 10px; height: 10px; line-height: 0; }
.scrollbar svg { width: 10px; height: 10px; }
.thumb { width: 15px; height: 17px; background: #cdcdcd; margin: auto 0 4px; }

.dock { width: 240px; flex: none; margin-left: 5px; display: flex; flex-direction: column; gap: 5px; }
.panel { border-left: 1px solid #777; flex: none; }
.options { height: 453px; padding-left: 1px; display: flex; flex-direction: column; gap: 2px; }
.panel.find { flex: 1; margin-bottom: 2px; }
.panel-head { height: 16px; flex: none; display: flex; align-items: center; gap: 7px; padding: 0 6px 2px 2px; background: linear-gradient(#e2e2e2, #bababa); border-right: 1px solid #777; }
.find .panel-head { border-top: 1px solid #777; height: 18px; padding-left: 3px; }
.panel-head h2 { flex: 1; font: 11px/13px "DejaVu Sans", sans-serif; margin-left: -3px; }
.panel-head button { width: 9px; height: 9px; line-height: 0; }
.panel-head svg { width: 9px; height: 9px; }
.grip-v { width: 3px; height: 8px; background: repeating-linear-gradient(#0078d7 0 3px, transparent 3px 5px); }
.panel-body { flex: 1; border: solid #666; border-width: 1px 1px 0 1px; padding: 18px 0 0 7px; }
.row { display: flex; align-items: center; }
.caption { height: 13px; }
.class-row { margin: 15px 0 12px 28px; }
.subclass-row { gap: 8px; margin-left: 8px; }
.color { width: 12px; height: 13px; background: #ff0; border: 2px solid; border-color: #777 #fff #fff #777; outline: 1px solid #888; outline-offset: -1px; }
.pick { position: relative; display: block; height: 21px; }
.pick::after { content: ""; position: absolute; right: 7px; top: 6px; width: 6px; height: 6px; border: solid #555; border-width: 0 1px 1px 0; transform: rotate(45deg); pointer-events: none; }
.pick select { appearance: none; width: 100%; height: 100%; display: block; padding-left: 4px; background: #e1e1e1; border: 1px solid #adadad; opacity: 1; }
.wide { width: 150px; }
.short { width: 45px; }
.medium { width: 73px; }
.white { height: 24px; }
.white::after { top: 8px; }
.white select { background: #fff; border-color: #777; padding-left: 21px; padding-bottom: 4px; }
.swatch { position: absolute; left: 5px; top: 5px; width: 11px; height: 14px; background: #ff0; border: 1px solid #000; }
.fields { display: grid; grid-template-columns: 84px 1fr; row-gap: 12px; align-items: center; margin-top: 31px; }
.pair { gap: 4px; }
.sunken { width: 73px; height: 21px; background: #fff; border: 1px solid #777; box-shadow: inset 1px 1px #fff, inset 2px 2px #666; padding-left: 4px; }

.find-body { padding: 7px 0 0 8px; display: flex; flex-direction: column; align-items: flex-start; }
fieldset { width: 190px; margin: 0; border: 1px solid #dcdcdc; padding: 0 4px 0 6px; min-width: 0; }
legend { padding: 0 3px; margin: 0; line-height: 13px; }
.filter { height: 236px; }
.by-name { height: 71px; margin-top: 6px; padding: 1px 3px 0 6px; }
.by-name .row { gap: 4px; height: 24px; }
.all { gap: 13px; padding: 6px 0 0 1px; }
.all button { width: 43px; height: 14px; }
.all button + button { width: 47px; }
button:disabled { background: #ccc; border: 1px solid #bfbfbf; color: #838383; }
.checks { display: grid; grid-template-columns: 84px 1fr; grid-auto-rows: 22px; margin-top: 4px; color: #6d6d6d; }
.checks label { display: flex; align-items: center; gap: 3px; white-space: nowrap; }
.checks input { appearance: none; width: 13px; height: 13px; background: #fff; border: 1px solid #ccc; }
.grow { flex: 1; min-width: 0; }
.by-name select { background: #ccc; border-color: #bfbfbf; color: #6d6d6d; }
.by-name .pick::after { border-color: #999; }
.name { width: 52px; }
.by-name label { width: 10px; }
.by-name .sunken { background: #f0f0f0; border-color: #ccc; }
.by-name button { width: 48px; height: 20px; margin-right: 3px; }
.query { width: 89px; height: 20px; background: #e1e1e1; border: 1px solid #adadad; margin: 15px 0 0 1px; }

.side { width: 32px; flex: none; position: relative; padding: 22px 3px 0 10px; }
.side-tab { display: block; width: 19px; height: 68px; writing-mode: vertical-rl; text-align: left; padding-top: 4px; border: 1px solid #7f9db9; border-right: 0; font: 11px/17px "DejaVu Sans", sans-serif; }
.meter { position: absolute; right: 3px; top: 643px; width: 7px; height: 58px; border-radius: 4px; background: linear-gradient(#a0a0a0 0 46px, #28b85c 46px 48px, #5ee86e 49px); box-shadow: 0 2px 6px #ccc; }

.status { flex: none; height: 18px; display: flex; border-top: 1px solid #777; line-height: 16px; text-align: center; }
.status span { border-left: 1px solid #777; margin-right: 1px; }
.message { flex: 1; text-align: left; padding-left: 3px; }
.status .on { background: #0f0; }
.progress { width: 52px; }
.blank { width: 132px; }
.layer { width: 122px; }
.coords { width: 132px; }
.status button { width: 15px; height: 16px; margin: 0 1px; border: 1px solid #777; line-height: 14px; }
.net { width: 102px; }
.gap { width: 43px; }
.mode { width: 122px; }
.off { width: 73px; }
.drc { width: 51px; }
.count { width: 43px; }
```
